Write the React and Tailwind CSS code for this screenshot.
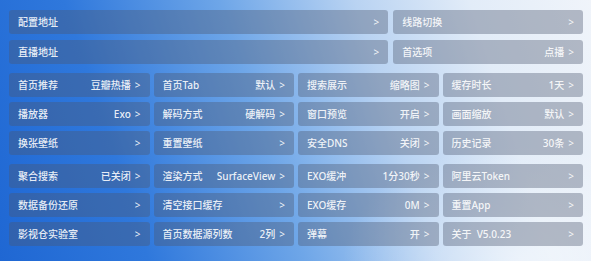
import React from "react";

const top = [
  { label: "配置地址" },
  { label: "线路切换" },
  { label: "直播地址" },
  { label: "首选项", value: "点播" },
];

const g2 = [
  { label: "首页推荐", value: "豆瓣热播" },
  { label: "首页Tab", value: "默认" },
  { label: "搜索展示", value: "缩略图" },
  { label: "缓存时长", value: "1天" },
  { label: "播放器", value: "Exo" },
  { label: "解码方式", value: "硬解码" },
  { label: "窗口预览", value: "开启" },
  { label: "画面缩放", value: "默认" },
  { label: "换张壁纸" },
  { label: "重置壁纸" },
  { label: "安全DNS", value: "关闭" },
  { label: "历史记录", value: "30条" },
];

const g3 = [
  { label: "聚合搜索", value: "已关闭" },
  { label: "渲染方式", value: "SurfaceView" },
  { label: "EXO缓冲", value: "1分30秒" },
  { label: "阿里云Token" },
  { label: "数据备份还原" },
  { label: "清空接口缓存" },
  { label: "EXO缓存", value: "0M" },
  { label: "重置App" },
  { label: "影视仓实验室" },
  { label: "首页数据源列数", value: "2列" },
  { label: "弹幕", value: "开" },
  { label: "关于  V5.0.23" },
];

function Card({ item }) {
  return (
    <div className="h-[24px] rounded-[3px] bg-[rgba(75,88,110,0.38)] flex items-center justify-between pl-[9px] pr-[9px] text-[10px] leading-none font-medium text-[rgba(255,255,255,0.9)] whitespace-pre">
      <span>{item.label}</span>
      <span className="flex items-center gap-[4px]">
        {item.value ? <span>{item.value}</span> : null}
        <span className="font-normal">&gt;</span>
      </span>
    </div>
  );
}

export default function App() {
  return (
    <div
      className="w-[591px] h-[261px] overflow-hidden pt-[10px] pl-[9px] pr-[8px] flex flex-col gap-[9px] bg-[radial-gradient(ellipse_30%_45%_at_88%_100%,rgba(255,255,255,0.55),rgba(255,255,255,0)),linear-gradient(72deg,#1f67d3_0%,#2f78dc_22%,#6ea6e8_45%,#b9d3f2_65%,#e2ecf8_82%,#f0f4fa_100%)]"
      style={{ fontFamily: '"Noto Sans", "Noto Sans CJK SC", sans-serif' }}
    >
      <div className="grid grid-cols-[2fr_1fr] gap-x-[5px] gap-y-[6px]">
        {top.map((it, i) => (
          <Card key={i} item={it} />
        ))}
      </div>
      <div className="grid grid-cols-4 gap-x-[4px] gap-y-[5px]">
        {g2.map((it, i) => (
          <Card key={i} item={it} />
        ))}
      </div>
      <div className="grid grid-cols-4 gap-x-[4px] gap-y-[5px]">
        {g3.map((it, i) => (
          <Card key={i} item={it} />
        ))}
      </div>
    </div>
  );
}
